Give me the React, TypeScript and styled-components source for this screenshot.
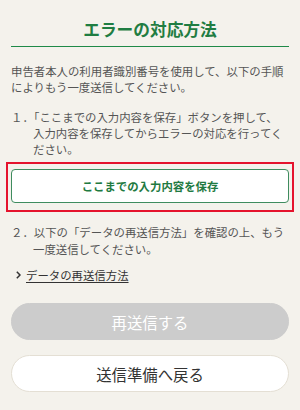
import React from 'react';
import styled, { createGlobalStyle } from 'styled-components';

const GlobalStyle = createGlobalStyle`
  html, body {
    margin: 0;
    padding: 0;
    background: #f4f2ec;
  }
  body {
    font-family: 'Noto Sans CJK JP', 'Noto Sans', sans-serif;
    color: #555;
    -webkit-font-smoothing: antialiased;
  }
`;

const Page = styled.main`
  width: 300px;
  min-height: 410px;
  box-sizing: border-box;
  padding: 18px 11px 0;
`;

const Title = styled.h1`
  margin: 0;
  padding-bottom: 5px;
  border-bottom: 1.7px solid #1f8a48;
  color: #1f7d42;
  font-size: 16.7px;
  line-height: 23px;
  font-weight: 700;
  text-align: center;
`;

const Lead = styled.p`
  margin: 16px -2px 0 0;
  font-size: 11.4px;
  line-height: 16.3px;
`;

const Steps = styled.ol`
  list-style: none;
  margin: 13px 0 0;
  padding: 0;
`;

const Step = styled.li`
  padding-left: 22px;
  text-indent: -22px;
  font-size: 11.4px;
  line-height: 16.3px;
`;

const Highlight = styled.div`
  margin: 5px -5px 12px;
  padding: 5px 3px 7px;
  border: 2px solid #e5132d;
`;

const SaveButton = styled.button`
  display: block;
  width: 100%;
  height: 34px;
  box-sizing: border-box;
  border: 1.7px solid #3f8c5f;
  border-radius: 4px;
  background: #fff;
  color: #1f7a42;
  font-family: inherit;
  font-size: 11.4px;
  font-weight: 700;
  cursor: pointer;
`;

const MoreLink = styled.a`
  display: flex;
  align-items: center;
  gap: 5px;
  margin: 10px 0 0 5px;
  color: #333;
  font-size: 11.4px;
  line-height: 16px;
  text-decoration: none;

  span {
    text-decoration: underline;
    text-underline-offset: 2px;
  }
`;

const Actions = styled.div`
  display: flex;
  flex-direction: column;
  gap: 15px;
  margin-top: 20px;
`;

const PillButton = styled.button<{ $variant: 'disabled' | 'plain' }>`
  height: 37px;
  border-radius: 19px;
  border: 1px solid ${({ $variant }) => ($variant === 'disabled' ? '#cccccc' : '#e4dfd4')};
  background: ${({ $variant }) => ($variant === 'disabled' ? '#cccccc' : '#fff')};
  color: ${({ $variant }) => ($variant === 'disabled' ? '#fff' : '#333')};
  font-family: inherit;
  font-size: 15.4px;
  cursor: ${({ $variant }) => ($variant === 'disabled' ? 'default' : 'pointer')};
`;

const Chevron = () => (
  <svg width="5" height="8" viewBox="0 0 5 8" aria-hidden="true">
    <path d="M0.8 0.8 L4 4 L0.8 7.2" fill="none" stroke="#333" strokeWidth="1.5" />
  </svg>
);

const App = () => (
  <>
    <GlobalStyle />
    <Page>
      <Title>エラーの対応方法</Title>
      <Lead>
        申告者本人の利用者識別番号を使用して、以下の手順によりもう一度送信してください。
      </Lead>
      <Steps>
        <Step>
          １．「ここまでの入力内容を保存」ボタンを押して、入力内容を保存してからエラーの対応を行ってください。
        </Step>
        <Highlight>
          <SaveButton>ここまでの入力内容を保存</SaveButton>
        </Highlight>
        <Step>
          ２．以下の「データの再送信方法」を確認の上、もう一度送信してください。
        </Step>
      </Steps>
      <MoreLink href="#">
        <Chevron />
        <span>データの再送信方法</span>
      </MoreLink>
      <Actions>
        <PillButton $variant="disabled" disabled>
          再送信する
        </PillButton>
        <PillButton $variant="plain">送信準備へ戻る</PillButton>
      </Actions>
    </Page>
  </>
);

export default App;
